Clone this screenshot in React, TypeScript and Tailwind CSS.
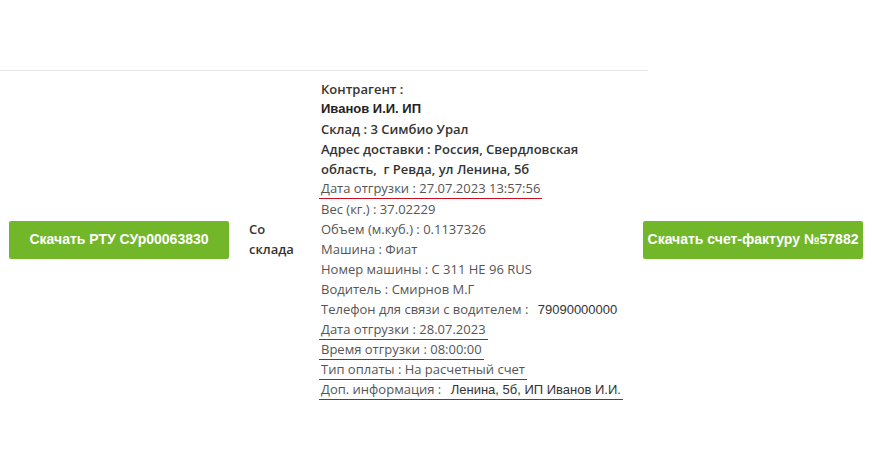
import React from "react";

const U = ({ children, className = "" }: { children: React.ReactNode; className?: string }) => (
  <div className={"w-fit -ml-[2px] " + className}>
    <div className="px-[2px] leading-[19px]">{children}</div>
    <div className="h-[1px] w-full bg-[#c8101e]" />
  </div>
);

const arial = { fontFamily: "'Liberation Sans', Arial, sans-serif" };

export default function App() {
  const btn =
    "flex h-[38px] w-[220px] items-center justify-center whitespace-nowrap rounded-[2px] bg-[#72b62a] text-[14px] font-bold text-white";
  return (
    <div className="h-[466px] w-[872px] bg-white">
      <div className="h-[70px]" />
      <div className="w-[648px] border-t border-[#e3e3e3]" />
      <div className="flex items-center pt-[8px]" style={{ fontFamily: "'Open Sans', sans-serif" }}>
        <div className="w-[249px] pl-[9px]">
          <div className={btn} style={arial}>
            Скачать РТУ СУр00063830
          </div>
        </div>
        <div className="w-[72px] -mt-[2px] text-[13px] font-semibold leading-[20px] text-[#333]">
          Со
          <br />
          склада
        </div>
        <div className="w-[300px] text-[13px] leading-[20px] text-[#555]">
          <div className="font-semibold text-[#333]">Контрагент :</div>
          <div className="text-[13px] font-bold text-[#222]" style={arial}>
            Иванов И.И. ИП
          </div>
          <div className="font-semibold text-[#333]">Склад : 3 Симбио Урал</div>
          <div className="font-semibold text-[#333] whitespace-nowrap">Адрес доставки : Россия, Свердловская</div>
          <div className="font-semibold text-[#333] whitespace-pre">область,  г Ревда, ул Ленина, 5б</div>
          <U>Дата отгрузки : 27.07.2023 13:57:56</U>
          <div>Вес (кг.) : 37.02229</div>
          <div>Объем (м.куб.) : 0.1137326</div>
          <div>Машина : Фиат</div>
          <div>Номер машины : С 311 НЕ 96 RUS</div>
          <div>Водитель : Смирнов М.Г</div>
          <div className="whitespace-nowrap">
            Телефон для связи с водителем :{" "}
            <span className="pl-[6px] text-[#333]" style={arial}>
              79090000000
            </span>
          </div>
          <U>Дата отгрузки : 28.07.2023</U>
          <U>Время отгрузки : 08:00:00</U>
          <U>Тип оплаты : На расчетный счет</U>
          <U className="whitespace-nowrap">
            Доп. информация :{" "}
            <span className="pl-[6px] text-[#333]" style={arial}>
              Ленина, 5б, ИП Иванов И.И.
            </span>
          </U>
        </div>
        <div className="ml-[22px]">
          <div className={btn} style={arial}>
            Скачать счет-фактуру №57882
          </div>
        </div>
      </div>
    </div>
  );
}
